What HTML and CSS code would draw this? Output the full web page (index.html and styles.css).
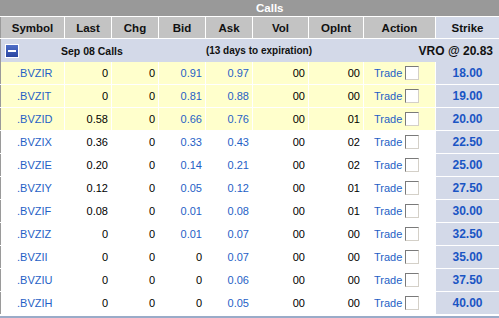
FILE: index.html
```html
<!DOCTYPE html>
<html>
<head>
<meta charset="utf-8">
<link rel="stylesheet" href="styles.css">
</head>
<body>
<div class="panel">
  <div class="title"><span class="title-text">Calls</span></div>
  <table class="chain">
    <colgroup>
      <col class="c-sym"><col class="c-num"><col class="c-num"><col class="c-num"><col class="c-num"><col class="c-vol"><col class="c-oi"><col class="c-act"><col class="c-strike">
    </colgroup>
    <thead>
      <tr class="head">
        <th>Symbol</th><th>Last</th><th>Chg</th><th>Bid</th><th>Ask</th><th>Vol</th><th>OpInt</th><th>Action</th><th class="strike-h">Strike</th>
      </tr>
    </thead>
    <tbody>
      <tr class="group">
        <td colspan="9">
          <div class="group-inner">
            <span class="minus"><span class="bar"></span></span>
            <span class="month">Sep 08 Calls</span>
            <span class="expiry">(13 days to expiration)</span>
            <span class="under">VRO @ 20.83</span>
          </div>
        </td>
      </tr>
      <tr class="itm"><td class="sym">.BVZIR</td><td class="n">0</td><td class="n">0</td><td class="q">0.91</td><td class="q">0.97</td><td class="n">00</td><td class="n">00</td><td class="act"><span class="trade">Trade</span><span class="cb"></span></td><td class="strike">18.00</td></tr>
      <tr class="itm"><td class="sym">.BVZIT</td><td class="n">0</td><td class="n">0</td><td class="q">0.81</td><td class="q">0.88</td><td class="n">00</td><td class="n">00</td><td class="act"><span class="trade">Trade</span><span class="cb"></span></td><td class="strike">19.00</td></tr>
      <tr class="itm"><td class="sym">.BVZID</td><td class="n">0.58</td><td class="n">0</td><td class="q">0.66</td><td class="q">0.76</td><td class="n">00</td><td class="n">01</td><td class="act"><span class="trade">Trade</span><span class="cb"></span></td><td class="strike">20.00</td></tr>
      <tr><td class="sym">.BVZIX</td><td class="n">0.36</td><td class="n">0</td><td class="q">0.33</td><td class="q">0.43</td><td class="n">00</td><td class="n">02</td><td class="act"><span class="trade">Trade</span><span class="cb"></span></td><td class="strike">22.50</td></tr>
      <tr><td class="sym">.BVZIE</td><td class="n">0.20</td><td class="n">0</td><td class="q">0.14</td><td class="q">0.21</td><td class="n">00</td><td class="n">02</td><td class="act"><span class="trade">Trade</span><span class="cb"></span></td><td class="strike">25.00</td></tr>
      <tr><td class="sym">.BVZIY</td><td class="n">0.12</td><td class="n">0</td><td class="q">0.05</td><td class="q">0.12</td><td class="n">00</td><td class="n">01</td><td class="act"><span class="trade">Trade</span><span class="cb"></span></td><td class="strike">27.50</td></tr>
      <tr><td class="sym">.BVZIF</td><td class="n">0.08</td><td class="n">0</td><td class="q">0.01</td><td class="q">0.08</td><td class="n">00</td><td class="n">01</td><td class="act"><span class="trade">Trade</span><span class="cb"></span></td><td class="strike">30.00</td></tr>
      <tr><td class="sym">.BVZIZ</td><td class="n">0</td><td class="n">0</td><td class="q">0.01</td><td class="q">0.07</td><td class="n">00</td><td class="n">00</td><td class="act"><span class="trade">Trade</span><span class="cb"></span></td><td class="strike">32.50</td></tr>
      <tr><td class="sym">.BVZII</td><td class="n">0</td><td class="n">0</td><td class="n">0</td><td class="q">0.07</td><td class="n">00</td><td class="n">00</td><td class="act"><span class="trade">Trade</span><span class="cb"></span></td><td class="strike">35.00</td></tr>
      <tr><td class="sym">.BVZIU</td><td class="n">0</td><td class="n">0</td><td class="n">0</td><td class="q">0.06</td><td class="n">00</td><td class="n">00</td><td class="act"><span class="trade">Trade</span><span class="cb"></span></td><td class="strike">37.50</td></tr>
      <tr><td class="sym">.BVZIH</td><td class="n">0</td><td class="n">0</td><td class="n">0</td><td class="q">0.05</td><td class="n">00</td><td class="n">00</td><td class="act"><span class="trade">Trade</span><span class="cb"></span></td><td class="strike">40.00</td></tr>
    </tbody>
  </table>
  <div class="foot"></div>
</div>
</body>
</html>
```
FILE: styles.css
```css
html, body {
  margin: 0;
  padding: 0;
  background: #ffffff;
}
body {
  font-family: "Liberation Sans", Arial, sans-serif;
  overflow: hidden;
}
.panel {
  width: 500px;
}
.title {
  height: 16px;
  background: #999999;
  border-bottom: 1px solid #ffffff;
  color: #ffffff;
  font-weight: bold;
  font-size: 11.5px;
  line-height: 16px;
  padding-left: 256px;
}
.chain {
  width: 500px;
  table-layout: fixed;
  border-collapse: collapse;
  border-left: 1px solid #9a9a9a;
}
.c-sym { width: 64px; }
.c-num { width: 47px; }
.c-vol { width: 56px; }
.c-oi { width: 55px; }
.c-act { width: 72px; }
.c-strike { width: 64px; }
.chain th, .chain td {
  padding: 0;
  border-right: 1px solid #ffffff;
  border-bottom: 1px solid #ffffff;
}
.head th {
  height: 21px;
  background: #c3c3c3;
  color: #111111;
  font-size: 11.5px;
  font-weight: bold;
  text-align: center;
}
.head th.strike-h {
  background: #d3d9e8;
}
.group td {
  height: 23px;
  background: #d3d9e8;
  border-bottom: 0;
}
.group-inner {
  display: flex;
  align-items: center;
  height: 23px;
  font-weight: bold;
  color: #111111;
}
.minus {
  width: 12px;
  height: 12px;
  margin-left: 4px;
  border: 1px solid #ffffff;
  background: linear-gradient(#4f6fc8, #2a45a0);
  display: flex;
  align-items: center;
  justify-content: center;
}
.minus .bar {
  width: 8px;
  height: 2px;
  background: #ffffff;
}
.month {
  font-size: 10.5px;
  margin-left: 42px;
}
.expiry {
  font-size: 10px;
  margin-left: 83px;
}
.under {
  font-size: 12px;
  margin-left: auto;
  margin-right: 6px;
}
.chain tbody td {
  height: 22px;
  font-size: 11px;
}
.itm td {
  background: #ffffcc;
}
.sym {
  color: #1f5fc6;
  padding-left: 16px !important;
  text-align: left;
}
.n, .q {
  text-align: right;
  padding-right: 3px !important;
}
.n { color: #000000; }
.q { color: #1f5fc6; }
.act {
  padding-left: 10px !important;
  white-space: nowrap;
}
.trade {
  color: #1f5fc6;
  vertical-align: middle;
}
.cb {
  display: inline-block;
  vertical-align: middle;
  width: 12px;
  height: 12px;
  margin-left: 3px;
  background: #ffffff;
  border-top: 1px solid #7a7a7a;
  border-left: 1px solid #7a7a7a;
  border-right: 1px solid #d4d0c8;
  border-bottom: 1px solid #d4d0c8;
}
.chain tbody td.strike {
  background: #d3d9e8;
  color: #1a55c4;
  font-weight: bold;
  font-size: 12px;
  text-align: center;
}
.foot {
  height: 2px;
  margin-top: 1px;
  background: #9aabc8;
}
```
